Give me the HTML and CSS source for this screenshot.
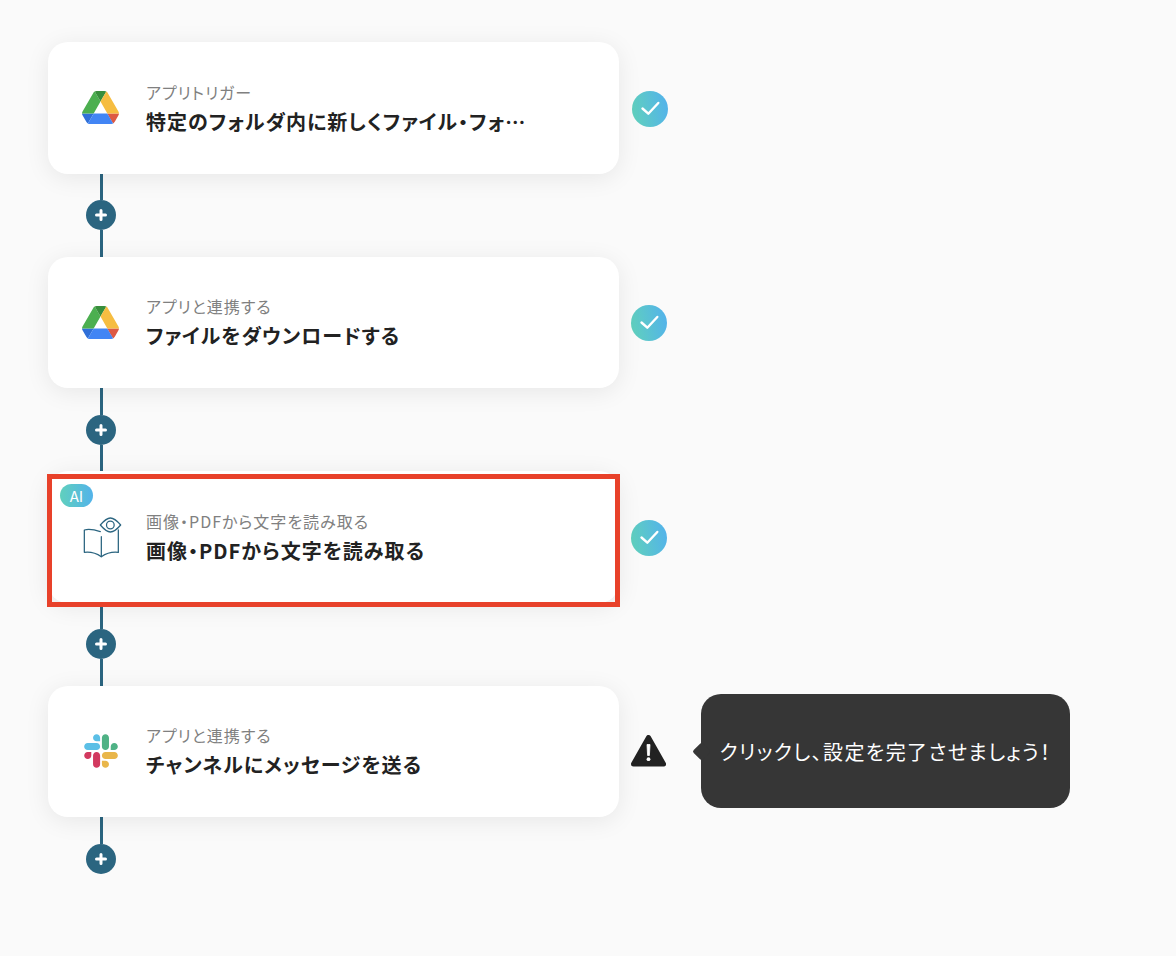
FILE: index.html
```html
<!DOCTYPE html>
<html lang="ja">
<head>
<meta charset="utf-8">
<title>フロー</title>
<link rel="stylesheet" href="styles.css">
</head>
<body>
<svg class="defs" width="0" height="0" aria-hidden="true">
  <defs>
    <symbol id="drive" viewBox="0 0 87.3 78">
      <path d="m6.6 66.85 3.85 6.65c.8 1.4 1.95 2.5 3.3 3.3l13.75-23.8h-27.5c0 1.55.4 3.1 1.2 4.5z" fill="#2f6fd8"/>
      <path d="m43.65 25-13.75-23.8c-1.35.8-2.5 1.9-3.3 3.3l-25.4 44a9.06 9.06 0 0 0 -1.2 4.5h27.5z" fill="#4caf50"/>
      <path d="m73.55 76.8c1.35-.8 2.5-1.9 3.3-3.3l1.6-2.75 7.65-13.25c.8-1.4 1.2-2.95 1.2-4.5h-27.502l5.852 11.5z" fill="#dd5944"/>
      <path d="m43.65 25 13.75-23.8c-1.35-.8-2.9-1.2-4.5-1.2h-18.5c-1.6 0-3.15.45-4.5 1.2z" fill="#388e3c"/>
      <path d="m59.8 53h-32.3l-13.75 23.8c1.35.8 2.9 1.2 4.5 1.2h50.8c1.6 0 3.15-.45 4.5-1.2z" fill="#4285f4"/>
      <path d="m73.4 26.5-12.7-22c-.8-1.4-1.95-2.5-3.3-3.3l-13.75 23.8 16.15 28h27.45c0-1.55-.4-3.1-1.2-4.5z" fill="#f6bd41"/>
    </symbol>
    <symbol id="check" viewBox="0 0 36 36">
      <circle cx="18" cy="18" r="18" fill="url(#grad)"/>
      <path d="M10.5 17.5l5.8 5.2 10-10.7" fill="none" stroke="#fff" stroke-width="2.4" stroke-linecap="round" stroke-linejoin="round"/>
    </symbol>
    <symbol id="plus" viewBox="0 0 30 30">
      <circle cx="15" cy="15" r="15" fill="#2b6580"/>
      <path d="M15 10.5v9M10.5 15h9" stroke="#fff" stroke-width="3" stroke-linecap="round"/>
    </symbol>
    <linearGradient id="grad" x1="0" y1="0.6" x2="1" y2="0.4">
      <stop offset="0" stop-color="#60d0bd"/>
      <stop offset="1" stop-color="#53b3ea"/>
    </linearGradient>
  </defs>
</svg>

<main class="flow">
  <section class="step">
    <div class="card">
      <svg class="logo"><use href="#drive"/></svg>
      <div class="text">
        <p class="kind">アプリトリガー</p>
        <p class="title">特定のフォルダ内に新しくファイル・フォ…</p>
      </div>
    </div>
    <svg class="status status-first"><use href="#check"/></svg>
  </section>
  <div class="link"><span class="wire"></span><svg class="add"><use href="#plus"/></svg><span class="wire"></span></div>

  <section class="step">
    <div class="card">
      <svg class="logo"><use href="#drive"/></svg>
      <div class="text">
        <p class="kind">アプリと連携する</p>
        <p class="title">ファイルをダウンロードする</p>
      </div>
    </div>
    <svg class="status"><use href="#check"/></svg>
  </section>
  <div class="link"><span class="wire"></span><svg class="add"><use href="#plus"/></svg><span class="wire"></span></div>

  <section class="step">
    <div class="card">
      <span class="badge">AI</span>
      <svg class="logo book" viewBox="120 150 130 135" fill="none" stroke="#2b6580" stroke-width="3.8" stroke-linejoin="round" stroke-linecap="round">
        <path d="M178 200C160 194 145 191 130 195V262C147 260 165 264 181 275C197 264 215 260 232 262V195"/>
        <path d="M181 215V275"/>
        <path d="M178 180C190 166 198 159 208 159S228 167 239 180C228 193 218 201 208 201S190 194 178 180Z"/>
        <circle cx="208" cy="180" r="11.5"/>
      </svg>
      <div class="text">
        <p class="kind">画像・PDFから文字を読み取る</p>
        <p class="title">画像・PDFから文字を読み取る</p>
      </div>
      <span class="frame"></span>
    </div>
    <svg class="status"><use href="#check"/></svg>
  </section>
  <div class="link"><span class="wire"></span><svg class="add"><use href="#plus"/></svg><span class="wire"></span></div>

  <section class="step">
    <div class="card">
      <svg class="logo slack" viewBox="0 0 127 127">
        <path d="M27.2 80c0 7.3-5.9 13.2-13.2 13.2C6.7 93.2.8 87.3.8 80c0-7.3 5.9-13.2 13.2-13.2h13.2V80zm6.6 0c0-7.3 5.9-13.2 13.2-13.2 7.3 0 13.2 5.9 13.2 13.2v33c0 7.3-5.9 13.2-13.2 13.2-7.3 0-13.2-5.9-13.2-13.2V80z" fill="#d2395f"/>
        <path d="M47 27c-7.3 0-13.2-5.9-13.2-13.2C33.8 6.5 39.7.6 47 .6c7.3 0 13.2 5.9 13.2 13.2V27H47zm0 6.7c7.3 0 13.2 5.9 13.2 13.2 0 7.3-5.9 13.2-13.2 13.2H13.9C6.6 60.1.7 54.2.7 46.9c0-7.3 5.9-13.2 13.2-13.2H47z" fill="#5bbfe6"/>
        <path d="M99.9 46.9c0-7.3 5.9-13.2 13.2-13.2 7.3 0 13.2 5.9 13.2 13.2 0 7.3-5.9 13.2-13.2 13.2H99.9V46.9zm-6.6 0c0 7.3-5.9 13.2-13.2 13.2-7.3 0-13.2-5.9-13.2-13.2V13.8C66.9 6.5 72.8.6 80.1.6c7.3 0 13.2 5.9 13.2 13.2v33.1z" fill="#4fb285"/>
        <path d="M80.1 99.8c7.3 0 13.2 5.9 13.2 13.2 0 7.3-5.9 13.2-13.2 13.2-7.3 0-13.2-5.9-13.2-13.2V99.8h13.2zm0-6.6c-7.3 0-13.2-5.9-13.2-13.2 0-7.3 5.9-13.2 13.2-13.2h33.1c7.3 0 13.2 5.9 13.2 13.2 0 7.3-5.9 13.2-13.2 13.2H80.1z" fill="#e9b64a"/>
      </svg>
      <div class="text">
        <p class="kind">アプリと連携する</p>
        <p class="title">チャンネルにメッセージを送る</p>
      </div>
    </div>
    <svg class="warn" viewBox="0 0 35 32">
      <polygon points="17.5,2.5 32.5,29 2.5,29" fill="#222" stroke="#222" stroke-width="5" stroke-linejoin="round"/>
      <path d="M16 9.5h3l-.6 11h-1.8z" fill="#fff" stroke="#fff" stroke-width=".8" stroke-linejoin="round"/>
      <circle cx="17.5" cy="24.2" r="1.9" fill="#fff"/>
    </svg>
    <div class="tip">クリックし、設定を完了させましょう！</div>
  </section>
  <div class="link link-end"><span class="wire"></span><svg class="add"><use href="#plus"/></svg></div>
</main>
</body>
</html>
```
FILE: styles.css
```css
* { box-sizing: border-box; }
html, body { margin: 0; padding: 0; }
body {
  background: #fafafa;
  font-family: "Noto Sans CJK JP", "Noto Sans", sans-serif;
  font-feature-settings: "palt";
  color: #222;
  height: 956px;
  overflow: hidden;
}
.defs { position: absolute; }
.flow { display: flex; flex-direction: column; padding: 42px 0 0 48px; }
.step { display: flex; align-items: center; }
.card {
  position: relative;
  width: 571px;
  height: 131.5px;
  flex: none;
  display: flex;
  align-items: center;
  gap: 27px;
  padding-left: 34px;
  background: #fff;
  border-radius: 20px;
  box-shadow: 0 4px 24px rgba(0, 0, 0, 0.08);
}
.logo { width: 37px; height: 33px; flex: none; }
.book { width: 43.33px; height: 45px; margin: 1.5px -4.83px 0 -1.5px; }
.slack { width: 34px; height: 34px; margin: 0 1.5px; }
.text { min-width: 0; padding-top: 1px; }
.kind { margin: 0; font-size: 16px; line-height: 22px; letter-spacing: 1px; color: #808080; }
.title { margin: 4px 0 0; font-size: 20px; line-height: 29px; font-weight: 700; letter-spacing: 1px; color: #222; white-space: nowrap; }
.badge {
  position: absolute;
  left: 12px;
  top: 13px;
  width: 33px;
  height: 23px;
  border-radius: 12px;
  background: linear-gradient(90deg, #60d0bd, #53b3ea);
  color: #fff;
  font-size: 15px;
  line-height: 23px;
  text-align: center;
}
.frame {
  position: absolute;
  left: -1px;
  right: -1px;
  top: 3px;
  bottom: -4.5px;
  border: 5px solid #e8412a;
  pointer-events: none;
}
.status { width: 36px; height: 36px; margin: 2px 0 0 12px; flex: none; }
.status-first { margin-left: 13px; }
.warn { width: 35px; height: 32px; margin-left: 12px; flex: none; }
.tip {
  position: relative;
  width: 369px;
  height: 114px;
  margin-left: 35px;
  display: flex;
  align-items: center;
  justify-content: center;
  background: #363636;
  border-radius: 20px;
  color: #fff;
  font-size: 20px;
  letter-spacing: 1.4px;
}
.tip::before {
  content: "";
  position: absolute;
  left: -6px;
  top: 50%;
  width: 13px;
  height: 13px;
  margin-top: -6.5px;
  background: #363636;
  border-radius: 2px;
  transform: rotate(45deg);
}
.link { display: flex; flex-direction: column; align-items: center; width: 30px; height: 83px; margin-left: 38px; }
.link-end { height: 57px; }
.wire { flex: 1; width: 3px; background: #2b6580; }
.add { width: 30px; height: 30px; flex: none; }
```
